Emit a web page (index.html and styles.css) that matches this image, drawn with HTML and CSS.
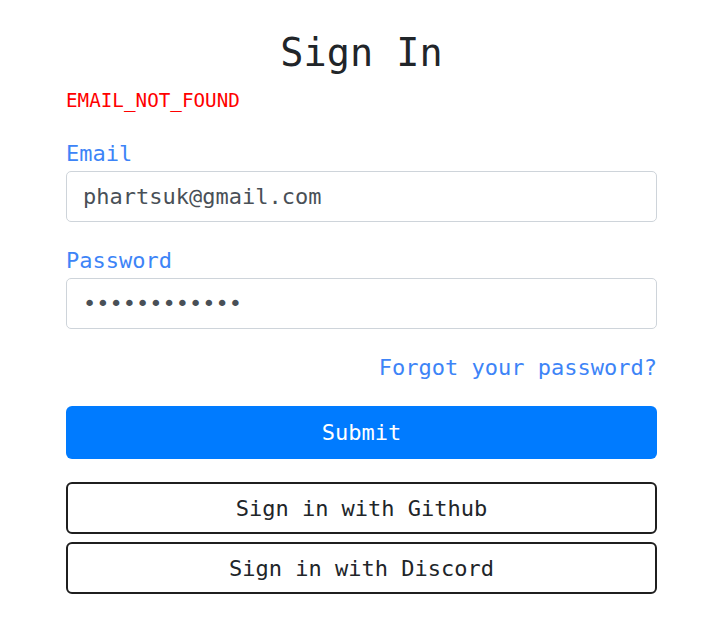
FILE: index.html
```html
<!DOCTYPE html>
<html lang="en">
<head>
<meta charset="utf-8">
<title>Sign In</title>
<link rel="stylesheet" href="styles.css">
</head>
<body>
<main class="signin">
  <h1 class="signin-title">Sign In</h1>
  <p class="signin-error">EMAIL_NOT_FOUND</p>
  <form class="signin-form" onsubmit="return false">
    <div class="field">
      <label class="field-label" for="email">Email</label>
      <input class="field-input" id="email" type="email" value="phartsuk@gmail.com">
    </div>
    <div class="field">
      <label class="field-label" for="password">Password</label>
      <input class="field-input" id="password" type="password" value="abcdefghijkl">
    </div>
    <div class="forgot-row"><a class="forgot-link" href="#">Forgot your password?</a></div>
    <button class="btn btn-primary" type="submit">Submit</button>
    <div class="oauth">
      <button class="btn btn-outline" type="button">Sign in with Github</button>
      <button class="btn btn-outline" type="button">Sign in with Discord</button>
    </div>
  </form>
</main>
</body>
</html>
```
FILE: styles.css
```css
* { box-sizing: border-box; }
html, body { margin: 0; padding: 0; background: #fff; }
body {
  font-family: "DejaVu Sans Mono", "Liberation Mono", monospace;
  font-size: 22px;
  color: #212529;
}
.signin {
  width: 591px;
  margin-left: 66px;
  padding-top: 30px;
}
.signin-title {
  margin: 0;
  font-size: 38.5px;
  line-height: 46px;
  font-weight: normal;
  text-align: center;
  color: #212529;
}
.signin-error {
  margin: 10px 0 0 0;
  font-size: 19.25px;
  line-height: 29px;
  color: #ff0000;
}
.signin-form {
  margin-top: 22px;
  display: flex;
  flex-direction: column;
}
.field { display: flex; flex-direction: column; margin-bottom: 22px; }
.field-label {
  line-height: 33px;
  margin-bottom: 1px;
  color: #3d84f7;
}
.field-input {
  height: 51px;
  width: 100%;
  padding: 0 16px;
  border: 1px solid #ced4da;
  border-radius: 5px;
  font-family: inherit;
  font-size: 22px;
  color: #495057;
  background: #fff;
  outline: none;
}
.forgot-row {
  text-align: right;
  line-height: 33px;
}
.forgot-link {
  color: #3d84f7;
  text-decoration: none;
}
.btn {
  display: block;
  width: 100%;
  font-family: inherit;
  font-size: 22px;
  border-radius: 6px;
  cursor: pointer;
}
.btn-primary {
  margin-top: 22px;
  height: 53px;
  border: none;
  background: #007bff;
  color: #fff;
}
.oauth {
  margin-top: 23px;
  display: flex;
  flex-direction: column;
  gap: 8px;
}
.btn-outline {
  height: 52px;
  border: 2px solid #1f1f1f;
  background: #fff;
  color: #212529;
}
```
